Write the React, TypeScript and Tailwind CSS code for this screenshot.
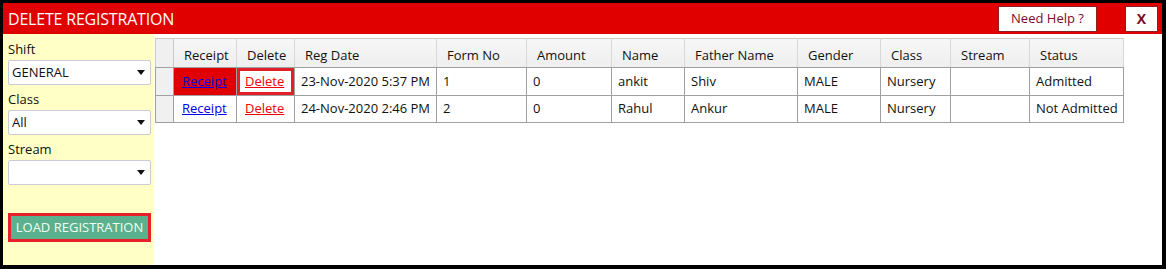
import React from 'react';

const font = { fontFamily: '"Open Sans", "Noto Sans", sans-serif' };

const columns = [
  { key: 'receipt', label: 'Receipt', width: 63 },
  { key: 'delete', label: 'Delete', width: 58 },
  { key: 'regDate', label: 'Reg Date', width: 142 },
  { key: 'formNo', label: 'Form No', width: 90 },
  { key: 'amount', label: 'Amount', width: 85 },
  { key: 'name', label: 'Name', width: 73 },
  { key: 'father', label: 'Father Name', width: 113 },
  { key: 'gender', label: 'Gender', width: 83 },
  { key: 'class', label: 'Class', width: 70 },
  { key: 'stream', label: 'Stream', width: 79 },
  { key: 'status', label: 'Status', width: 94 },
];

const rows = [
  { id: 1, regDate: '23-Nov-2020 5:37 PM', formNo: '1', amount: '0', name: 'ankit', father: 'Shiv', gender: 'MALE', cls: 'Nursery', stream: '', status: 'Admitted' },
  { id: 2, regDate: '24-Nov-2020 2:46 PM', formNo: '2', amount: '0', name: 'Rahul', father: 'Ankur', gender: 'MALE', cls: 'Nursery', stream: '', status: 'Not Admitted' },
];

const Select: React.FC<{ value: string }> = ({ value }) => (
  <div className="mt-[2px] h-[25px] w-[143px] bg-white border border-[#c9ccd4] rounded-[2px] flex items-center justify-between pl-[3px] pr-[5px] text-[13px] text-[#111]">
    <span>{value}</span>
    <svg width="8" height="5" viewBox="0 0 8 5"><path d="M0 0h8L4 5z" fill="#111" /></svg>
  </div>
);

const App: React.FC = () => {
  const cell = 'border border-[#a0a0a0] px-[6px] text-left font-normal whitespace-nowrap overflow-hidden';

  return (
    <div className="w-[1166px] h-[269px] bg-black pl-[3px] pt-[3px] pr-[4px] pb-[4px]" style={font}>
      <div className="w-full h-full flex flex-col bg-white">
        <div className="h-[31px] bg-[#e10000] flex items-center justify-between pl-[5px] pr-[4px] shrink-0">
          <h1 className="text-white text-[16px] tracking-[-0.2px]">DELETE REGISTRATION</h1>
          <div className="flex items-center">
            <button className="w-[99px] h-[26px] bg-white border border-[#8a2020] text-[#7a0a28] text-[13px] mr-[28px]">Need Help ?</button>
            <button className="w-[33px] h-[26px] bg-white border border-[#8a2020] text-[#7a0a28] text-[14px] font-bold">X</button>
          </div>
        </div>

        <div className="flex flex-1 min-h-0">
          <div className="w-[151px] bg-[#ffffc6] pl-[5px] pt-[6px] shrink-0">
            <label className="block h-[18px] leading-[18px] text-[13px] text-[#111]">Shift</label>
            <Select value="GENERAL" />
            <label className="block mt-[5px] h-[18px] leading-[18px] text-[13px] text-[#111]">Class</label>
            <Select value="All" />
            <label className="block mt-[5px] h-[18px] leading-[18px] text-[13px] text-[#111]">Stream</label>
            <Select value="" />
            <button className="mt-[28px] w-[143px] h-[29px] border-[3px] border-[#e8202a] bg-[#5bb08d] text-[#f2fff4] text-[13px]">
              LOAD REGISTRATION
            </button>
          </div>

          <div className="flex-1 pt-[4px] pl-[1px]">
            <table className="border-collapse text-[13px] text-[#111] table-fixed" style={{ width: 969 }}>
              <colgroup>
                <col style={{ width: 18 }} />
                {columns.map(c => <col key={c.key} style={{ width: c.width }} />)}
              </colgroup>
              <thead>
                <tr className="h-[29px] bg-gradient-to-b from-[#f7f7f7] to-[#eeeeee]">
                  <th className="border border-[#c8c8c8] border-b-[#a0a0a0] bg-[#f0f0f0]"></th>
                  {columns.map(c => (
                    <th key={c.key} className="border border-[#d8d8d8] border-t-[#c8c8c8] border-b-[#a0a0a0] pl-[10px] pt-[5px] text-left font-normal whitespace-nowrap">
                      {c.label}
                    </th>
                  ))}
                </tr>
              </thead>
              <tbody>
                {rows.map((r, i) => (
                  <tr key={r.id} className={i === 0 ? 'h-[28px]' : 'h-[27px]'}>
                    <td className="border border-[#a0a0a0] bg-[#f0f0f0]"></td>
                    <td className={`${cell} pl-[8px] ${i === 0 ? 'bg-[#e10000]' : ''}`}>
                      <a className="text-[#0000ee] underline">Receipt</a>
                    </td>
                    <td className={`${cell} pl-[8px] ${i === 0 ? 'shadow-[inset_0_0_0_3px_#e0202a]' : ''}`}>
                      <a className="text-[#ee0000] underline">Delete</a>
                    </td>
                    <td className={cell}>{r.regDate}</td>
                    <td className={cell}>{r.formNo}</td>
                    <td className={cell}>{r.amount}</td>
                    <td className={cell}>{r.name}</td>
                    <td className={cell}>{r.father}</td>
                    <td className={cell}>{r.gender}</td>
                    <td className={cell}>{r.cls}</td>
                    <td className={cell}>{r.stream}</td>
                    <td className={cell}>{r.status}</td>
                  </tr>
                ))}
              </tbody>
            </table>
          </div>
        </div>
      </div>
    </div>
  );
};

export default App;
